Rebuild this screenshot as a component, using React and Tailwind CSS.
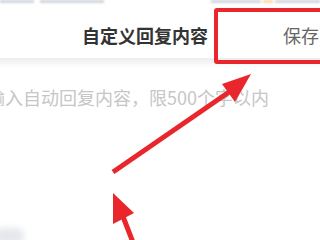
export default function App() {
  return (
    <div className="relative w-[320px] h-[240px] overflow-hidden bg-white font-['Noto_Sans_CJK_SC','Noto_Sans',sans-serif]">
      {/* status bar, mostly cut off */}
      <div className="flex h-[6px] items-start">
        <div className="h-[3px] w-[34px] bg-gray-300 blur-[1px]" />
        <div className="ml-[6px] h-[3px] w-[64px] bg-gray-300 blur-[1px]" />
        <div className="ml-auto h-[3px] w-[50px] bg-gray-300 blur-[1px]" />
        <div className="ml-[2px] h-[3px] w-[10px] bg-orange-200 blur-[1px]" />
        <div className="ml-[2px] h-[3px] w-[45px] bg-gray-300 blur-[1px]" />
      </div>

      {/* header */}
      <div className="flex h-[52px] items-center pt-[6px]">
        <div className="pl-[82px] text-[18px] leading-[24px] font-bold text-[#333]">自定义回复内容</div>
        <div className="ml-auto pr-[1px] text-[18px] leading-[24px] text-[#666]">保存</div>
      </div>
      <div className="h-[10px] bg-gradient-to-b from-[#ededf0] to-white" />

      {/* input placeholder */}
      <div className="-ml-[13px] pt-[17px] text-[18px] leading-[24px] whitespace-nowrap text-[#c6c6c6]">
        输入自动回复内容，限500个字以内
      </div>

      {/* faint blob bottom-left */}
      <div className="absolute left-[-6px] top-[228px] h-[16px] w-[30px] rounded-full bg-gray-200 blur-[3px]" />

      {/* red highlight box */}
      <div className="absolute left-[214px] top-[8px] h-[56px] w-[120px] rounded-[3px] border-[4px] border-[#e8262b]" />

      {/* arrows */}
      <svg className="absolute inset-0" width="320" height="240" viewBox="0 0 320 240">
        <line x1="113" y1="172" x2="232" y2="90" stroke="#e8262b" strokeWidth="5" />
        <polygon points="251,74 222,84 235,102" fill="#e8262b" />
        <line x1="122" y1="214" x2="134" y2="245" stroke="#e8262b" strokeWidth="5" />
        <polygon points="113,193 113,224 134,213" fill="#e8262b" />
      </svg>
    </div>
  )
}
